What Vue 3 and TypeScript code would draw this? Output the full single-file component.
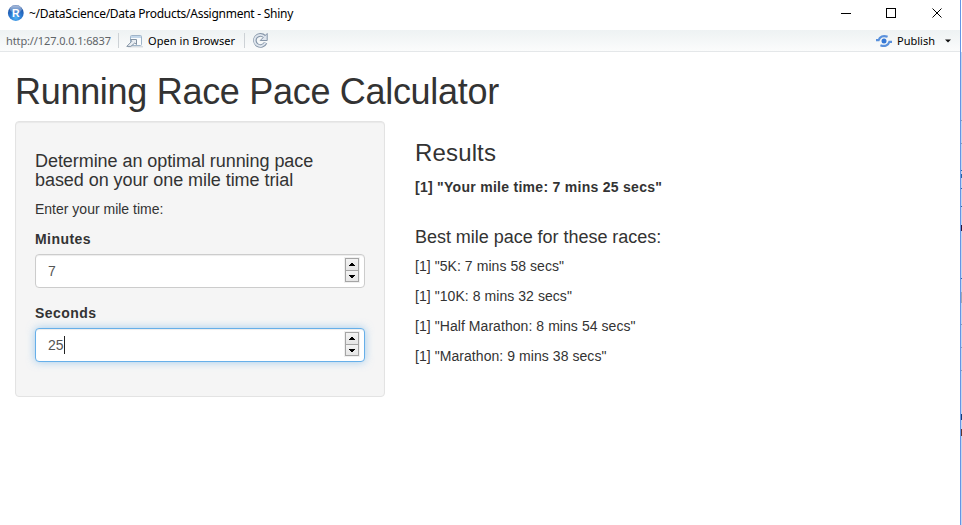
<script setup lang="ts">
import { ref, computed } from 'vue'

interface Race { name: string; minutes: number; seconds: number }

const minutes = ref(7)
const seconds = ref(25)
const fields = [
  { label: 'Minutes', value: minutes, focused: false },
  { label: 'Seconds', value: seconds, focused: true },
]
const races: Race[] = [
  { name: '5K', minutes: 7, seconds: 58 },
  { name: '10K', minutes: 8, seconds: 32 },
  { name: 'Half Marathon', minutes: 8, seconds: 54 },
  { name: 'Marathon', minutes: 9, seconds: 38 },
]
const mileTime = computed(() => `[1] "Your mile time: ${minutes.value} mins ${seconds.value} secs"`)
</script>

<template>
  <div class="screen">
    <div class="window">
      <header class="titlebar">
        <svg class="logo" width="18" height="18" viewBox="0 0 18 18">
          <defs>
            <radialGradient id="ball" cx="50%" cy="80%" r="75%">
              <stop offset="0" stop-color="#4fb2f5" />
              <stop offset="0.55" stop-color="#2a74cc" />
              <stop offset="1" stop-color="#1c4c9c" />
            </radialGradient>
            <linearGradient id="shine" x1="0" y1="0" x2="0" y2="1">
              <stop offset="0" stop-color="#fff" stop-opacity="0.65" />
              <stop offset="1" stop-color="#fff" stop-opacity="0.08" />
            </linearGradient>
          </defs>
          <circle cx="8.8" cy="9" r="7.9" fill="url(#ball)" />
          <ellipse cx="8.8" cy="5.2" rx="6" ry="3.9" fill="url(#shine)" />
          <text x="8.9" y="12.7" text-anchor="middle" class="logo-letter">R</text>
        </svg>
        <span class="caption">~/DataScience/Data Products/Assignment - Shiny</span>
        <svg class="controls" width="104" height="12" viewBox="0 0 104 12" fill="none" stroke="#000" stroke-width="1">
          <path d="M1 6.5H11" />
          <rect x="46.5" y="1.5" width="9" height="9" />
          <path d="M92.5 1.5L101.5 10.5M101.5 1.5L92.5 10.5" />
        </svg>
      </header>

      <div class="toolbar">
        <span class="url">http://127.0.0.1:6837</span>
        <i class="divider"></i>
        <svg class="open-icon" width="18" height="14" viewBox="0 0 18 14" fill="none">
          <rect x="4.5" y="1.5" width="11" height="10" rx="1" fill="#fafcfd" stroke="#9fb4c9" />
          <path d="M5 3H15" stroke="#c3d7ea" stroke-width="2" />
          <path d="M2 12.8H17" stroke="#c9d0d6" />
          <path d="M4.5 5.5H10.5V10.5L8.8 9L4.8 12.4H.8L5.8 7.3Z" fill="#e9eef3" stroke="#8292a3" stroke-linejoin="round" />
        </svg>
        <span class="open">Open in Browser</span>
        <i class="divider"></i>
        <svg class="refresh" width="17" height="17" viewBox="0 0 17 17" fill="none">
          <path d="M12.6 4.6A5.6 5.6 0 1 0 13.6 10.8" stroke="#8595a8" stroke-width="3.6" />
          <path d="M15.2 1.5V8.5H8.2Z" fill="#dfe6ee" stroke="#8595a8" stroke-linejoin="round" />
          <path d="M12.6 4.9A5.6 5.6 0 1 0 13.3 10.8" stroke="#dfe6ee" stroke-width="1.8" />
        </svg>
        <div class="publish">
          <svg width="18" height="14" viewBox="0 0 18 14" fill="none" stroke="#5a91dc" stroke-width="2.2">
            <path d="M1 6.2H3.6C4.6 2.6 8.2 1 12.6 2.8" />
            <path d="M17 7.8H14.4C13.4 11.4 9.8 13 5.4 11.2" />
            <circle cx="9" cy="7" r="2.5" fill="#3478d6" stroke="none" />
          </svg>
          <span>Publish</span>
          <svg class="caret" width="6" height="4" viewBox="0 0 6 4"><path d="M0 .5H6L3 3.5Z" fill="#111" /></svg>
        </div>
      </div>

      <main class="page">
        <h1>Running Race Pace Calculator</h1>
        <div class="row">
          <form class="well" @submit.prevent>
            <h4>Determine an optimal running pace<br />based on your one mile time trial</h4>
            <p>Enter your mile time:</p>
            <div v-for="field in fields" :key="field.label" class="group">
              <label>{{ field.label }}</label>
              <div class="control" :class="{ focused: field.focused }">
                <span class="value">{{ field.value.value }}</span>
                <i v-if="field.focused" class="text-cursor"></i>
                <span class="spinner">
                  <button type="button" aria-label="Increase" @click="field.value.value++">
                    <svg width="6" height="3" viewBox="0 0 6 3" shape-rendering="crispEdges"><path d="M2 0H4V1H5V2H6V3H0V2H1V1H2Z" /></svg>
                  </button>
                  <button type="button" aria-label="Decrease" @click="field.value.value--">
                    <svg width="6" height="3" viewBox="0 0 6 3" shape-rendering="crispEdges"><path d="M0 0H6V1H5V2H4V3H2V2H1V1H0Z" /></svg>
                  </button>
                </span>
              </div>
            </div>
          </form>
          <section class="results">
            <h3>Results</h3>
            <p class="strong">{{ mileTime }}</p>
            <h4>Best mile pace for these races:</h4>
            <p v-for="race in races" :key="race.name">[1] "{{ race.name }}: {{ race.minutes }} mins {{ race.seconds }} secs"</p>
          </section>
        </div>
      </main>
    </div>
    <aside class="backdrop"></aside>
  </div>
</template>

<style>
body { margin: 0; overflow: hidden; }
</style>

<style scoped>
* { box-sizing: border-box; }
.screen { display: flex; width: 962px; height: 525px; background: #fff; font-family: "Liberation Sans", Arial, sans-serif; color: #333; }
.window { width: 961px; flex: none; border-right: 1px solid #6495e5; }
.backdrop { width: 1px; background: linear-gradient(#fff 0 52px, #c6d5ed 52px 120px, #8c9cb4 120px 121px, #c6d5ed 121px 143px, #8c9cb4 143px 144px, #c6d5ed 144px 170px, #2864a5 170px 171px, #c6d5ed 171px 174px, #2864a5 174px 178px, #c6d5ed 178px 188px, #2864a5 188px 189px, #c6d5ed 189px 206px, #2864a5 206px 207px, #c6d5ed 207px 225px, #2b1439 225px 231px, #c6d5ed 231px 278px, #2864a5 278px 279px, #c6d5ed 279px 292px, #a0a8b5 292px 303px, #c6d5ed 303px 324px, #8c9cb4 324px 325px, #c6d5ed 325px 347px, #8c9cb4 347px 348px, #c6d5ed 348px 370px, #8c9cb4 370px 371px, #c6d5ed 371px 414px, #173d73 414px 420px, #c6d5ed 420px 429px, #60362e 429px 436px, #c6d5ed 436px); }
.titlebar { display: flex; align-items: center; height: 30px; padding: 0 16px 4px 7px; font-family: "Noto Sans", "Open Sans", sans-serif; font-size: 12px; color: #000; }
.logo { margin-right: 4px; }
.logo-letter { font: bold 10.5px "Liberation Sans", sans-serif; fill: #fff; }
.caption { white-space: nowrap; letter-spacing: -0.26px; padding-top: 1px; }
.controls { margin-left: auto; }
.toolbar { display: flex; align-items: center; height: 22px; padding: 0 9px 0 6px; border-bottom: 1px solid #e4e7e9; background: linear-gradient(#eef2f3, #fbfcfc); font-family: "Noto Sans", "Open Sans", sans-serif; font-size: 11px; color: #000; white-space: nowrap; }
.url { width: 112px; color: #606468; letter-spacing: -0.12px; }
.divider { width: 1px; height: 15px; background: #cdd2d6; }
.open-icon { margin: 0 4px 0 7px; }
.open { width: 96px; letter-spacing: 0.06px; }
.refresh { margin-left: 7px; }
.publish { display: flex; align-items: center; margin-left: auto; }
.publish span { margin-left: 4px; width: 39px; }
.caret { margin-left: 9px; }
.page { padding: 20px 15px 0; }
h1, h3, h4, p { margin: 0; font-weight: 400; }
h1 { font-size: 36px; line-height: 39px; margin-bottom: 10px; letter-spacing: -0.3px; white-space: nowrap; }
h3 { font-size: 24px; line-height: 24px; margin-bottom: 12px; letter-spacing: 0.15px; }
h4 { font-size: 18px; line-height: 19px; padding-top: 1px; margin-bottom: 9px; white-space: nowrap; letter-spacing: -0.06px; }
p { font-size: 14px; line-height: 20px; margin-bottom: 10px; }
.row { display: flex; align-items: flex-start; gap: 30px; }
.well { width: 370px; height: 276px; padding: 29px 19px 19px; background: #f5f5f5; border: 1px solid #e3e3e3; border-radius: 4px; box-shadow: inset 0 1px 1px rgba(0, 0, 0, .05); }
.group { margin-bottom: 15px; }
label { display: block; font-size: 14px; font-weight: 700; line-height: 20px; margin-bottom: 5px; letter-spacing: 0.45px; }
.control { display: flex; align-items: center; height: 34px; padding: 0 5px 0 12px; background: #fff; border: 1px solid #ccc; border-radius: 4px; box-shadow: inset 0 1px 1px rgba(0, 0, 0, .075); font-size: 14px; color: #555; }
.focused { border-color: #66afe9; box-shadow: inset 0 1px 1px rgba(0, 0, 0, .075), 0 0 8px rgba(102, 175, 233, .6); }
.text-cursor { width: 1px; height: 18px; background: #222; }
.spinner { display: flex; flex-direction: column; width: 14px; height: 24px; margin: 0 0 2px auto; outline: 1px solid #f0f0f0; }
.spinner button { display: flex; align-items: center; justify-content: center; width: 14px; height: 13px; padding: 0; border: 1px solid #a5a5a5; background: linear-gradient(#f3f3f3, #e6e6e6); }
.spinner button + button { margin-top: -1px; height: 12px; }
.results { padding-top: 20px; }
.results p { letter-spacing: 0.06px; }
.results .strong { font-weight: 700; margin-bottom: 30px; letter-spacing: 0.28px; }
.results h4 { letter-spacing: -0.03px; }
</style>
